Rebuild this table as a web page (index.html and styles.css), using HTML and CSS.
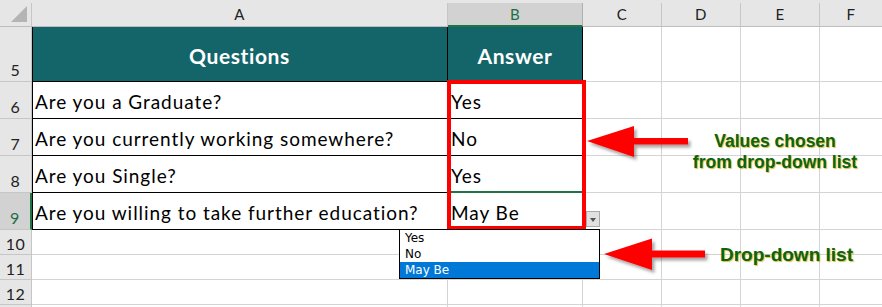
FILE: index.html
```html
<!DOCTYPE html>
<html>
<head>
	<meta charset="utf-8">
	<title>Drop-down list</title>
	<link rel="stylesheet" href="styles.css">
</head>
<body>
<div class="sheet">
	<div class="strip"></div>
	<div class="grid">
		<!-- column headers -->
		<div class="corner"><span class="corner-mark"></span></div>
		<div class="col-head">A</div>
		<div class="col-head selected">B</div>
		<div class="col-head">C</div>
		<div class="col-head">D</div>
		<div class="col-head">E</div>
		<div class="col-head last">F</div>

		<!-- row 5 -->
		<div class="row-head">5</div>
		<div class="cell title first">Questions</div>
		<div class="cell title">Answer</div>
		<div class="cell"></div><div class="cell"></div><div class="cell"></div><div class="cell last"></div>

		<!-- row 6 -->
		<div class="row-head">6</div>
		<div class="cell item first">Are you a Graduate?</div>
		<div class="cell item">Yes</div>
		<div class="cell"></div><div class="cell"></div><div class="cell"></div><div class="cell last"></div>

		<!-- row 7 -->
		<div class="row-head">7</div>
		<div class="cell item first">Are you currently working somewhere?</div>
		<div class="cell item">No</div>
		<div class="cell"></div><div class="cell"></div><div class="cell"></div><div class="cell last"></div>

		<!-- row 8 -->
		<div class="row-head">8</div>
		<div class="cell item first">Are you Single?</div>
		<div class="cell item above-active">Yes</div>
		<div class="cell"></div><div class="cell"></div><div class="cell"></div><div class="cell last"></div>

		<!-- row 9 -->
		<div class="row-head selected">9</div>
		<div class="cell item first">Are you willing to take further education?</div>
		<div class="cell item">May Be</div>
		<div class="cell"></div><div class="cell"></div><div class="cell"></div><div class="cell last"></div>

		<!-- rows 10 - 12 -->
		<div class="row-head small">10</div>
		<div class="cell"></div><div class="cell"></div><div class="cell"></div><div class="cell"></div><div class="cell"></div><div class="cell last"></div>
		<div class="row-head small">11</div>
		<div class="cell"></div><div class="cell"></div><div class="cell"></div><div class="cell"></div><div class="cell"></div><div class="cell last"></div>
		<div class="row-head small">12</div>
		<div class="cell"></div><div class="cell"></div><div class="cell"></div><div class="cell"></div><div class="cell"></div><div class="cell last"></div>
		<div class="row-head"></div>
		<div class="cell"></div><div class="cell"></div><div class="cell"></div><div class="cell"></div><div class="cell"></div><div class="cell last"></div>
	</div>

	<!-- overlays -->
	<div class="highlight-box"></div>
	<div class="dd-button"><span></span></div>
	<ul class="dd-list">
		<li>Yes</li>
		<li>No</li>
		<li class="picked">May Be</li>
	</ul>

	<svg class="arrows" width="882" height="307" viewBox="0 0 882 307">
		<defs>
			<filter id="shadow" x="-20%" y="-30%" width="140%" height="180%">
				<feDropShadow dx="2.5" dy="3" stdDeviation="1.5" flood-color="#000" flood-opacity="0.35"/>
			</filter>
		</defs>
		<polygon filter="url(#shadow)" fill="#ff0000"
			points="587,141 634,126 634,138 688,138 688,144.5 634,144.5 634,157"/>
		<polygon filter="url(#shadow)" fill="#ff0000"
			points="604,254 652,238.5 652,250.5 705,250.5 705,257.5 652,257.5 652,270"/>
	</svg>

	<div class="note note-values">Values chosen<br>from drop-down list</div>
	<div class="note note-list">Drop-down list</div>
</div>
</body>
</html>
```

FILE: styles.css
```css
* {
	margin: 0;
	padding: 0;
	box-sizing: border-box;
}

body {
	background: #fff;
	font-family: Lato, "Noto Sans", sans-serif;
	color: #000;
	overflow: hidden;
}

.sheet {
	position: relative;
	width: 882px;
	height: 307px;
	overflow: hidden;
}

.strip {
	height: 3px;
	background: #e6e6e6;
}

.grid {
	display: grid;
	grid-template-columns: 32px 416px 135px 79px 79px 79px 1fr;
	grid-template-rows: 24px 55px 37px 37px 37px 37px 25px 25px 25px 20px;
}

/* headers */
.corner,
.col-head,
.row-head {
	background: #e6e6e6;
	border-right: 1px solid #c6c6c6;
	border-bottom: 1px solid #bdbdbd;
	font-size: 15px;
	color: #222;
	display: flex;
}

.corner {
	position: relative;
}

.corner-mark {
	position: absolute;
	right: 4px;
	bottom: 4px;
	width: 0;
	height: 0;
	border-left: 16px solid transparent;
	border-bottom: 16px solid #b4b4b4;
}

.col-head {
	justify-content: center;
	align-items: center;
	padding-bottom: 1px;
	letter-spacing: 0.5px;
}

.col-head.last {
	border-right: none;
}

.col-head.selected {
	background: #d2d2d2;
	color: #1f6e43;
	border-bottom: 2px solid #217346;
	border-right-color: #b0b0b0;
}

.row-head {
	justify-content: center;
	align-items: flex-end;
	padding-bottom: 2px;
	border-bottom-color: #c6c6c6;
	font-size: 16px;
	line-height: 18px;
	letter-spacing: 0.5px;
}

.row-head.small {
	padding-bottom: 1px;
}

.row-head.selected {
	background: #d2d2d2;
	color: #1f6e43;
	border-right: 2px solid #217346;
}

/* cells */
.cell {
	border-right: 1px solid #d4d4d4;
	border-bottom: 1px solid #d4d4d4;
	display: flex;
	align-items: flex-end;
	white-space: nowrap;
}

.cell.last {
	border-right: none;
}

.cell.first {
	box-shadow: inset 1px 0 #000;
}

.cell.title {
	background: #13656a;
	color: #fff;
	font-weight: 700;
	font-size: 21px;
	letter-spacing: 0.6px;
	justify-content: center;
	align-items: center;
	padding-top: 2px;
	border-right-color: #000;
	border-bottom-color: #000;
}

.cell.item {
	font-size: 19px;
	line-height: 22px;
	letter-spacing: 0.95px;
	padding: 0 0 5px 3px;
	border-right-color: #000;
	border-bottom-color: #000;
}

.cell.above-active {
	border-bottom: 2px solid #217346;
	padding-bottom: 4px;
}

/* red frame round the answers */
.highlight-box {
	position: absolute;
	left: 447px;
	top: 80px;
	width: 139px;
	height: 150px;
	border: 4px solid #ff0000;
}

/* data validation drop-down */
.dd-button {
	position: absolute;
	left: 586px;
	top: 211px;
	width: 14px;
	height: 16px;
	background: #e1e1e1;
	border: 1px solid #a9a9a9;
}

.dd-button span {
	position: absolute;
	left: 3px;
	top: 6px;
	border-left: 3.5px solid transparent;
	border-right: 3.5px solid transparent;
	border-top: 4px solid #555;
}

.dd-list {
	position: absolute;
	left: 399px;
	top: 229px;
	width: 201px;
	height: 50px;
	background: #fff;
	border: 1px solid #000;
	list-style: none;
	font-family: "DejaVu Sans", sans-serif;
	font-size: 12px;
	color: #000;
}

.dd-list li {
	height: 16px;
	line-height: 16px;
	padding-left: 5px;
}

.dd-list li.picked {
	background: #0078d7;
	color: #fff;
}

.arrows {
	position: absolute;
	left: 0;
	top: 0;
}

/* callout labels */
.note {
	position: absolute;
	font-family: "Liberation Sans", Arial, sans-serif;
	font-weight: 700;
	color: #0b6414;
	text-shadow: 1px 1px 1px rgba(215, 160, 0, 0.75);
	white-space: nowrap;
}

.note-values {
	left: 688px;
	top: 131px;
	width: 174px;
	text-align: center;
	font-size: 17.5px;
	line-height: 21px;
}

.note-list {
	left: 720px;
	top: 244px;
	font-size: 19px;
	line-height: 21px;
}
```
